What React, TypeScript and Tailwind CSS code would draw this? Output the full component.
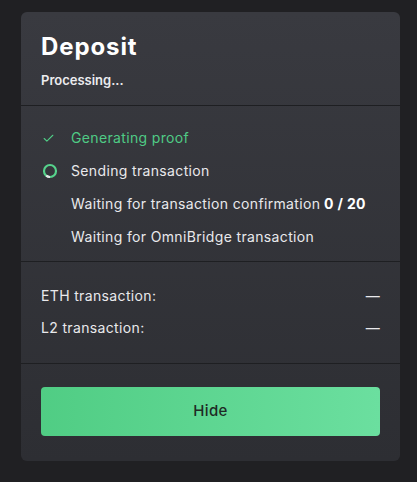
import { Check } from 'lucide-react';

/**
 * One row of the progress list
 */
interface Step {
    label: string;
    state: 'done' | 'active' | 'pending';
    extra?: string;
}

const steps: Step[] = [
    { label: 'Generating proof', state: 'done' },
    { label: 'Sending transaction', state: 'active' },
    { label: 'Waiting for transaction confirmation', state: 'pending', extra: '0 / 20' },
    { label: 'Waiting for OmniBridge transaction', state: 'pending' },
];

function StepIcon({ state }: { state: Step['state'] }) {
    if (state === 'done') {
        return <Check size={13} strokeWidth={2} className="text-[#4fcb85]" />;
    }
    if (state === 'active') {
        return (
            <svg width="16" height="16" viewBox="0 0 16 16">
                <circle cx="8" cy="8" r="6" fill="none" stroke="#56d38c" strokeWidth="2.2" />
                <path d="M 4.2 12.6 A 6 6 0 0 0 8 14" fill="none" stroke="#e8e8ea" strokeWidth="2.2" />
            </svg>
        );
    }
    return null;
}

export default function App() {
    return (
        <div
            className="min-h-screen bg-[#202023] pt-3 pl-[21px] pr-[17px] text-[#e9e9ec]"
            style={{ fontFamily: 'Inter, "Open Sans", sans-serif' }}
        >
            <div className="w-[379px] rounded-md bg-gradient-to-b from-[#393a40] to-[#2d2e33] overflow-hidden">
                {/* Header */}
                <div className="px-5 pt-[21px] pb-[16px]">
                    <h1 className="text-[24px] font-bold leading-[28px] text-white tracking-[0.9px]">Deposit</h1>
                    <p className="mt-[10px] text-[13px] font-semibold leading-[18px] text-[#ececef]">Processing...</p>
                </div>
                <div className="h-px bg-[#1e1f22]" />

                {/* Steps */}
                <div className="px-5 pt-[23px] pb-[15px] flex flex-col gap-[15px]">
                    {steps.map((step) => (
                        <div key={step.label} className="flex items-center h-[18px]">
                            <div className="w-[30px] flex items-center pl-[1px]">
                                <StepIcon state={step.state} />
                            </div>
                            <span
                                className={`text-[14px] leading-[18px] tracking-[0.35px] ${
                                    step.state === 'done' ? 'text-[#4fcb85]' : 'text-[#e9e9ec]'
                                }`}
                            >
                                {step.label}
                                {step.extra && <span className="font-bold text-white"> {step.extra}</span>}
                            </span>
                        </div>
                    ))}
                </div>
                <div className="h-px bg-[#1e1f22]" />

                {/* Transactions */}
                <div className="px-5 pt-[25px] pb-[26px] flex flex-col gap-[14px] text-[14px] leading-[18px] tracking-[0.35px]">
                    <div className="flex justify-between items-center">
                        <span>ETH transaction:</span>
                        <span>—</span>
                    </div>
                    <div className="flex justify-between items-center">
                        <span>L2 transaction:</span>
                        <span>—</span>
                    </div>
                </div>
                <div className="h-px bg-[#1e1f22]" />

                {/* Action */}
                <div className="px-5 pt-[23px] pb-[25px]">
                    <button className="w-full h-[49px] rounded bg-gradient-to-r from-[#50cd84] to-[#6bdf9f] text-[#1f2a25] text-[15px] font-medium tracking-[0.4px]">
                        Hide
                    </button>
                </div>
            </div>
        </div>
    );
}
